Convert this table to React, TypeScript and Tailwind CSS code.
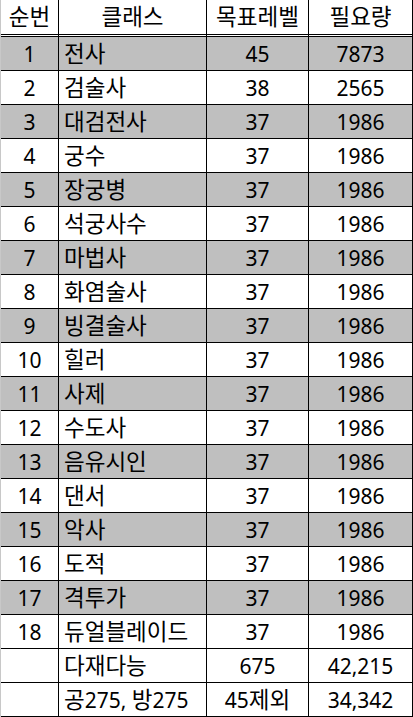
import React from "react";

const rows: [string, string, string, string][] = [
  ["1", "전사", "45", "7873"],
  ["2", "검술사", "38", "2565"],
  ["3", "대검전사", "37", "1986"],
  ["4", "궁수", "37", "1986"],
  ["5", "장궁병", "37", "1986"],
  ["6", "석궁사수", "37", "1986"],
  ["7", "마법사", "37", "1986"],
  ["8", "화염술사", "37", "1986"],
  ["9", "빙결술사", "37", "1986"],
  ["10", "힐러", "37", "1986"],
  ["11", "사제", "37", "1986"],
  ["12", "수도사", "37", "1986"],
  ["13", "음유시인", "37", "1986"],
  ["14", "댄서", "37", "1986"],
  ["15", "악사", "37", "1986"],
  ["16", "도적", "37", "1986"],
  ["17", "격투가", "37", "1986"],
  ["18", "듀얼블레이드", "37", "1986"],
  ["", "다재다능", "675", "42,215"],
  ["", "공275, 방275", "45제외", "34,342"],
];

function T({ s }: { s: string }) {
  const parts = s.match(/[\uAC00-\uD7A3]+|[^\uAC00-\uD7A3]+/g) || [];
  return (
    <span className="whitespace-pre">
      {parts.map((p, i) =>
        /[\uAC00-\uD7A3]/.test(p) ? (
          <span key={i} className="text-[22.5px]">
            {p}
          </span>
        ) : (
          <span key={i} className="text-[21px]">
            {p}
          </span>
        )
      )}
    </span>
  );
}

export default function App() {
  return (
    <div
      className="w-[413px] h-[717px] bg-white text-black border-l border-[#c8c8c8] overflow-hidden"
      style={{ fontFamily: '"Noto Sans", "Noto Sans CJK KR", sans-serif' }}
    >
      <div className="grid grid-cols-[58px_148px_102px_104px] leading-none">
        {["순번", "클래스", "목표레벨", "필요량"].map((h) => (
          <div
            key={h}
            className="h-[37px] border-b-[3px] border-double border-black border-r border-r-black flex items-center justify-center pt-[1px]"
          >
            <T s={h} />
          </div>
        ))}
        {rows.map((r, idx) => {
          const gray = idx < 18 && idx % 2 === 0;
          const bg = gray ? "bg-[#bfbfbf]" : "bg-white";
          return (
            <React.Fragment key={idx}>
              <div
                className={`h-[34px] border-b border-r border-black flex items-center justify-center pt-[2px] ${bg}`}
              >
                <T s={r[0]} />
              </div>
              <div
                className={`h-[34px] border-b border-r border-black flex items-center justify-start pl-[5px] pt-[2px] ${bg}`}
              >
                <T s={r[1]} />
              </div>
              <div
                className={`h-[34px] border-b border-r border-black flex items-center justify-center pt-[2px] ${bg}`}
              >
                <T s={r[2]} />
              </div>
              <div
                className={`h-[34px] border-b border-r border-black flex items-center justify-center pt-[2px] ${bg}`}
              >
                <T s={r[3]} />
              </div>
            </React.Fragment>
          );
        })}
      </div>
    </div>
  );
}
